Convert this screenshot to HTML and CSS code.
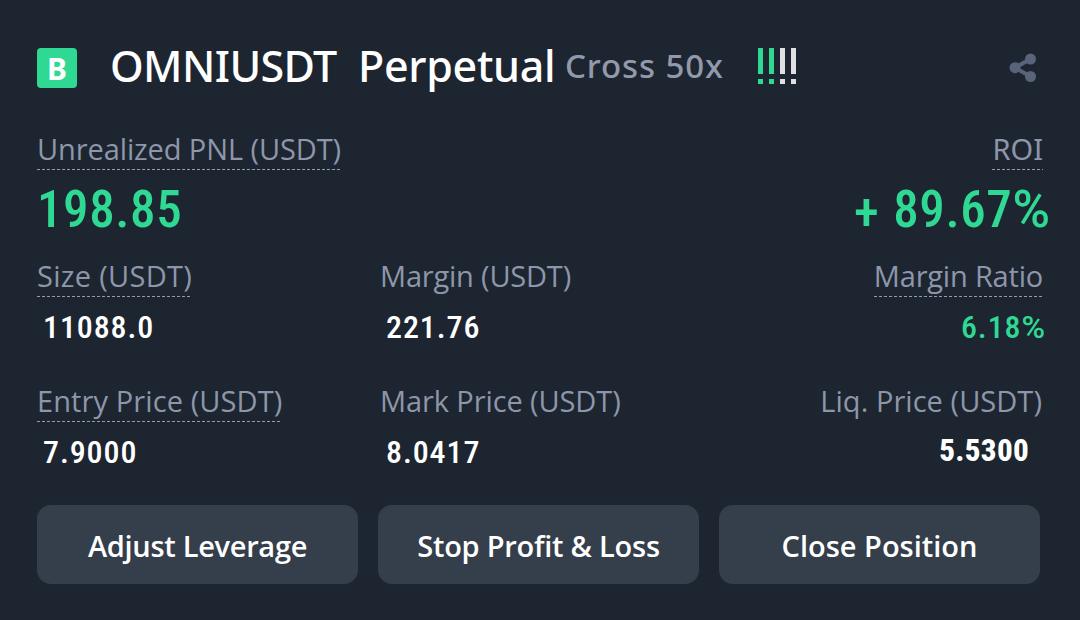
FILE: index.html
```html
<!DOCTYPE html>
<html lang="en">
<head>
    <meta charset="UTF-8">
    <meta name="viewport" content="width=device-width, initial-scale=1.0">
    <title>OMNIUSDT Perpetual</title>
    <link rel="stylesheet" href="styles.css">
</head>
<body>
    <div class="position">
        <header class="header">
            <span class="side">B</span>
            <h1 class="symbol"><span class="pair">OMNIUSDT</span><span class="contract">Perpetual</span></h1>
            <span class="leverage">Cross 50x</span>
            <svg class="risk" width="42" height="36" viewBox="0 0 42 36">
                <path class="risk-on" d="M0 0h5v26H0zM0 31h5v5H0zM11 0h5v26h-5zM11 31h5v5h-5z"/>
                <path class="risk-off" d="M22 0h5v26h-5zM22 31h5v5h-5zM33 0h5v26h-5zM33 31h5v5h-5z"/>
            </svg>
            <svg class="share" width="28" height="30" viewBox="0 0 28 30">
                <path d="M21.5 6L6 14.7l15.500 8.800" fill="none" stroke="#59647b" stroke-width="4"/>
                <circle cx="21.500" cy="6" r="5.500"/>
                <circle cx="6" cy="14.700" r="5.500"/>
                <circle cx="21.500" cy="23.500" r="5.500"/>
            </svg>
        </header>

        <div class="row row-main">
            <div class="cell">
                <span class="label dashed label-pnl">Unrealized PNL (USDT)</span>
                <span class="value big green">198.85</span>
            </div>
            <div class="cell right">
                <span class="label dashed label-roi">ROI</span>
                <span class="value big green roi"><span class="sign">+</span>89.67<span class="percent">%</span></span>
            </div>
        </div>

        <div class="row">
            <div class="cell">
                <span class="label dashed label-size">Size (USDT)</span>
                <span class="value indent">11088.0</span>
            </div>
            <div class="cell">
                <span class="label label-margin">Margin (USDT)</span>
                <span class="value indent">221.76</span>
            </div>
            <div class="cell right">
                <span class="label dashed label-ratio">Margin Ratio</span>
                <span class="value green ratio">6.18<span class="percent">%</span></span>
            </div>
        </div>

        <div class="row">
            <div class="cell">
                <span class="label dashed label-entry">Entry Price (USDT)</span>
                <span class="value indent">7.9000</span>
            </div>
            <div class="cell">
                <span class="label label-mark">Mark Price (USDT)</span>
                <span class="value indent">8.0417</span>
            </div>
            <div class="cell right">
                <span class="label label-liq">Liq. Price (USDT)</span>
                <span class="value liq">5.5300</span>
            </div>
        </div>

        <div class="actions">
            <button class="adjust">Adjust Leverage</button>
            <button class="stop">Stop Profit &amp; Loss</button>
            <button>Close Position</button>
        </div>
    </div>
</body>
</html>
```
FILE: styles.css
```css
* {
    box-sizing: border-box;
}
body {
    margin: 0;
    background-color: #1d2530;
    font-family: 'Open Sans', 'Noto Sans', sans-serif;
    color: #fff;
}
.position {
    height: 620px;
    padding: 38px 37px 0;
    overflow: hidden;
}
.header {
    display: flex;
    align-items: center;
    height: 60px;
    margin-bottom: 33px;
    white-space: nowrap;
}
.side {
    width: 40px;
    height: 40px;
    border-radius: 4px;
    background-color: #2fd994;
    font: bold 30px/41px 'Noto Sans', sans-serif;
    text-align: center;
}
.symbol {
    display: flex;
    width: 455px;
    margin: -4px 0 0 33px;
    font: 500 43px/60px 'Noto Sans', sans-serif;
}
.pair {
    width: 248px;
    letter-spacing: -0.6px;
}
.contract {
    letter-spacing: -0.3px;
}
.leverage {
    width: 193px;
    margin-top: -5px;
    font: 500 33px/60px 'Noto Sans', sans-serif;
    letter-spacing: 0.9px;
    color: #9299ab;
}
.risk {
    margin-top: -4px;
}
.risk-on {
    fill: #2fd994;
}
.risk-off {
    fill: #e0e0e4;
}
.share {
    margin-left: auto;
    margin-right: 6px;
    fill: #59647b;
}
.row {
    display: grid;
    grid-template-columns: 343px 1fr 300px;
    height: 99px;
    margin-bottom: 26px;
}
.row-main {
    grid-template-columns: 1fr 1fr;
    height: 116px;
    margin-bottom: 11px;
}
.cell {
    display: flex;
    flex-direction: column;
    align-items: flex-start;
    white-space: nowrap;
}
.right {
    align-items: flex-end;
}
.label {
    height: 40px;
    font-size: 29px;
    line-height: 36px;
    color: #8e96aa;
}
.label-pnl {
    letter-spacing: -0.1px;
}
.label-roi {
    font-family: 'Noto Sans', sans-serif;
}
.label-size {
    letter-spacing: 0.3px;
}
.label-margin {
    letter-spacing: -0.2px;
}
.label-ratio {
    letter-spacing: -0.2px;
}
.label-entry {
    letter-spacing: 0.1px;
}
.label-mark {
    letter-spacing: -0.1px;
}
.label-liq {
    margin-right: 1px;
    letter-spacing: 0.05px;
}
.dashed {
    background: repeating-linear-gradient(to right, #969caa 0 3px, transparent 3px 5px) 0 38px / 100% 1px no-repeat;
}
.value {
    font-family: Roboto, sans-serif;
    font-size: 32px;
    font-weight: 500;
    font-stretch: condensed;
    line-height: 59px;
    letter-spacing: 0.9px;
}
.big {
    font-size: 51px;
    line-height: 77px;
    letter-spacing: 0.6px;
}
.indent {
    margin-left: 6px;
}
.green {
    color: #2fd994;
}
.roi {
    margin-right: -7px;
}
.sign {
    position: relative;
    top: 3px;
    margin-right: 14px;
}
.percent {
    font-stretch: normal;
    letter-spacing: 0;
}
.ratio {
    margin-right: -2px;
}
.liq {
    margin-right: 14px;
    font-size: 31px;
    font-weight: 800;
    line-height: 56px;
    letter-spacing: 0.3px;
}
.actions {
    display: grid;
    grid-template-columns: repeat(3, 321px);
    gap: 20px;
    margin-top: -3px;
}
button {
    height: 79px;
    padding: 2px 0 0;
    border: none;
    border-radius: 14px;
    background-color: #353e4b;
    color: #fff;
    font: 600 29px 'Open Sans', sans-serif;
    cursor: pointer;
}
.adjust {
    letter-spacing: -0.3px;
}
.stop {
    letter-spacing: -0.25px;
}
```
